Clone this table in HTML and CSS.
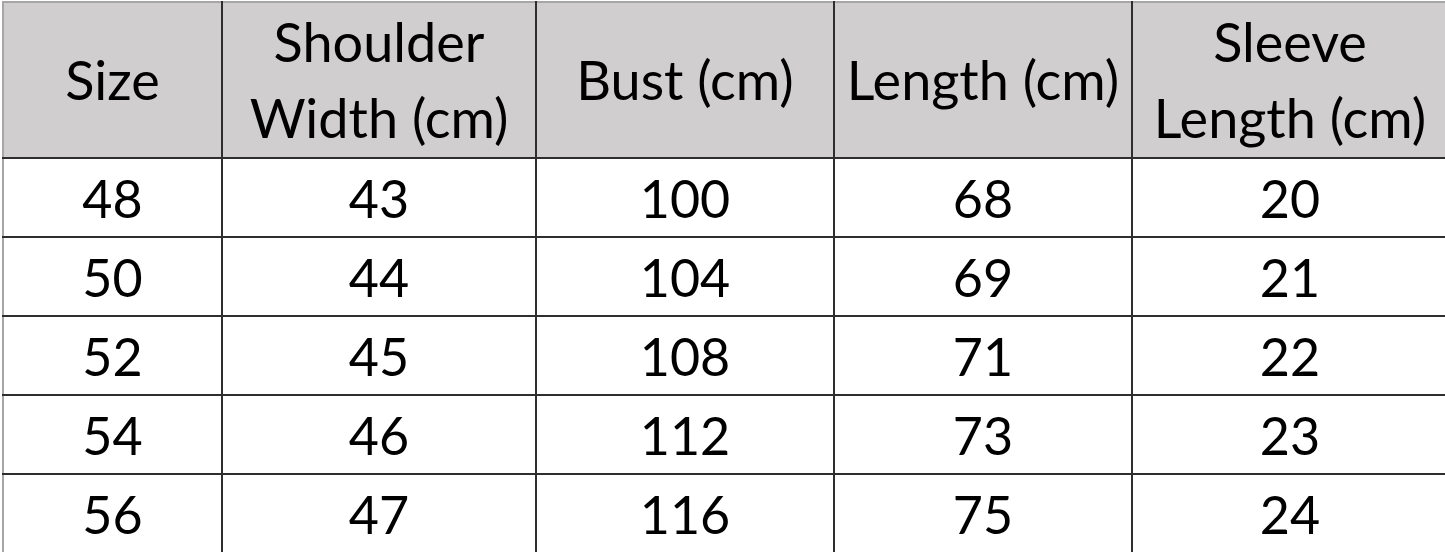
FILE: index.html
```html
<!DOCTYPE html>
<html>
<head>
<meta charset="utf-8">
<link rel="stylesheet" href="styles.css">
</head>
<body>
<table class="size-table">
  <colgroup>
    <col class="c-size">
    <col class="c-shoulder">
    <col class="c-bust">
    <col class="c-length">
    <col class="c-sleeve">
  </colgroup>
  <thead>
    <tr>
      <th>Size</th>
      <th>Shoulder<br>Width (cm)</th>
      <th>Bust (cm)</th>
      <th>Length (cm)</th>
      <th>Sleeve<br>Length (cm)</th>
    </tr>
  </thead>
  <tbody>
    <tr><td>48</td><td>43</td><td>100</td><td>68</td><td>20</td></tr>
    <tr><td>50</td><td>44</td><td>104</td><td>69</td><td>21</td></tr>
    <tr><td>52</td><td>45</td><td>108</td><td>71</td><td>22</td></tr>
    <tr><td>54</td><td>46</td><td>112</td><td>73</td><td>23</td></tr>
    <tr><td>56</td><td>47</td><td>116</td><td>75</td><td>24</td></tr>
  </tbody>
</table>
</body>
</html>
```
FILE: styles.css
```css
html, body {
  margin: 0;
  padding: 0;
  background: #ffffff;
}
body {
  padding: 1px 0 0 2px;
  overflow: hidden;
  font-family: "Lato", "Open Sans", "Liberation Sans", sans-serif;
  color: #000;
}
.size-table {
  border-collapse: collapse;
  table-layout: fixed;
  width: 1445px;
}
.c-size { width: 219px; }
.c-shoulder { width: 314px; }
.c-bust { width: 298px; }
.c-length { width: 298px; }
.c-sleeve { width: 316px; }

.size-table th,
.size-table td {
  padding: 0;
  text-align: center;
  vertical-align: middle;
  border: 2px solid #2e2e2e;
  font-weight: 400;
  font-size: 52px;
  line-height: 1;
  white-space: nowrap;
}
.size-table th {
  background: #d0cece;
  height: 154px;
  font-size: 54px;
  line-height: 76px;
  border-top: 2px solid #a6a6a6;
}
.size-table th:first-child,
.size-table td:first-child {
  border-left: 2px solid #a6a6a6;
}
.size-table td {
  height: 77px;
}
.size-table tbody tr:last-child td {
  border-bottom: 2px solid #000;
}
```
